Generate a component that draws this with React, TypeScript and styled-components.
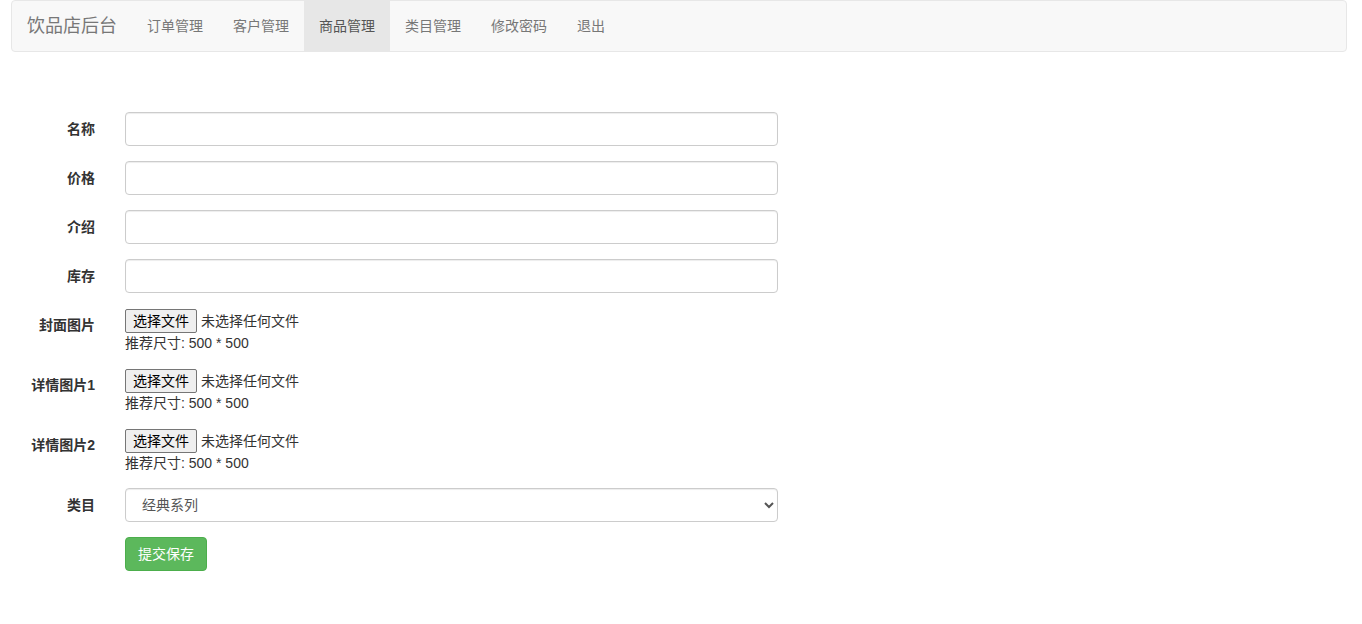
import React from "react";
import styled, { createGlobalStyle } from "styled-components";

const GlobalStyle = createGlobalStyle`
  html, body { margin: 0; padding: 0; background: #fff; }
  body {
    font-family: "Liberation Sans", "Noto Sans CJK SC", sans-serif;
    font-size: 14px;
    line-height: 1.42857143;
    color: #333;
  }
  * { box-sizing: border-box; }
`;

const Page = styled.div`
  padding: 0 15px 40px 11px;
`;

const Navbar = styled.nav`
  display: flex;
  align-items: stretch;
  min-height: 52px;
  background: #f8f8f8;
  border: 1px solid #e7e7e7;
  border-radius: 4px;
`;

const Brand = styled.a`
  display: block;
  height: 50px;
  padding: 15px 15px;
  font-size: 18px;
  line-height: 20px;
  color: #777;
  text-decoration: none;
`;

const NavList = styled.ul`
  display: flex;
  list-style: none;
  margin: 0;
  padding: 0;
`;

const NavLink = styled.a<{ $active?: boolean }>`
  display: block;
  padding: 15px 15px;
  line-height: 20px;
  font-size: 14px;
  color: ${(p) => (p.$active ? "#555" : "#777")};
  background: ${(p) => (p.$active ? "#e7e7e7" : "transparent")};
  text-decoration: none;
`;

const Form = styled.form`
  margin-top: 60px;
  display: flex;
  flex-direction: column;
  gap: 15px;
`;

const Group = styled.div`
  display: grid;
  grid-template-columns: 84px 653px;
  column-gap: 30px;
  align-items: start;
`;

const Label = styled.label`
  padding-top: 7px;
  text-align: right;
  font-weight: bold;
  line-height: 20px;
  color: #333;
`;

const Input = styled.input`
  display: block;
  width: 100%;
  height: 34px;
  padding: 6px 12px;
  font-family: inherit;
  font-size: 14px;
  color: #555;
  background: #fff;
  border: 1px solid #ccc;
  border-radius: 4px;
  box-shadow: inset 0 1px 1px rgba(0, 0, 0, 0.075);
  outline: none;
`;

const Select = styled.select`
  display: block;
  width: 100%;
  height: 34px;
  padding: 6px 12px;
  font-family: inherit;
  font-size: 14px;
  color: #555;
  background: #fff;
  border: 1px solid #ccc;
  border-radius: 4px;
  box-shadow: inset 0 1px 1px rgba(0, 0, 0, 0.075);
  outline: none;
`;

const FileCol = styled.div`
  display: flex;
  flex-direction: column;
`;

const FileLine = styled.div`
  display: flex;
  align-items: center;
  gap: 4px;
  height: 25px;
  font-size: 14px;
  color: #333;
`;

const FileButton = styled.span`
  display: inline-flex;
  align-items: center;
  height: 24px;
  padding: 0 7px;
  background: #efefef;
  border: 1px solid #767676;
  border-radius: 2px;
  color: #000;
  font-size: 14px;
`;

const Hint = styled.div`
  line-height: 20px;
  color: #333;
`;

const SubmitButton = styled.button`
  justify-self: start;
  height: 34px;
  padding: 6px 12px;
  font-family: inherit;
  font-size: 14px;
  line-height: 20px;
  color: #fff;
  background: #5cb85c;
  border: 1px solid #4cae4c;
  border-radius: 4px;
`;

const navItems = ["订单管理", "客户管理", "商品管理", "类目管理", "修改密码", "退出"];

const FileField: React.FC<{ label: string }> = ({ label }) => (
  <Group>
    <Label>{label}</Label>
    <FileCol>
      <FileLine>
        <FileButton>选择文件</FileButton>
        <span>未选择任何文件</span>
      </FileLine>
      <Hint>推荐尺寸: 500 * 500</Hint>
    </FileCol>
  </Group>
);

export default function App() {
  return (
    <>
      <GlobalStyle />
      <Page>
        <Navbar>
          <Brand href="#">饮品店后台</Brand>
          <NavList>
            {navItems.map((n) => (
              <li key={n}>
                <NavLink href="#" $active={n === "商品管理"}>
                  {n}
                </NavLink>
              </li>
            ))}
          </NavList>
        </Navbar>
        <Form onSubmit={(e) => e.preventDefault()}>
          <Group>
            <Label>名称</Label>
            <Input type="text" />
          </Group>
          <Group>
            <Label>价格</Label>
            <Input type="text" />
          </Group>
          <Group>
            <Label>介绍</Label>
            <Input type="text" />
          </Group>
          <Group>
            <Label>库存</Label>
            <Input type="text" />
          </Group>
          <FileField label="封面图片" />
          <FileField label="详情图片1" />
          <FileField label="详情图片2" />
          <Group>
            <Label>类目</Label>
            <Select defaultValue="1">
              <option value="1">经典系列</option>
            </Select>
          </Group>
          <Group>
            <span />
            <SubmitButton type="submit">提交保存</SubmitButton>
          </Group>
        </Form>
      </Page>
    </>
  );
}
